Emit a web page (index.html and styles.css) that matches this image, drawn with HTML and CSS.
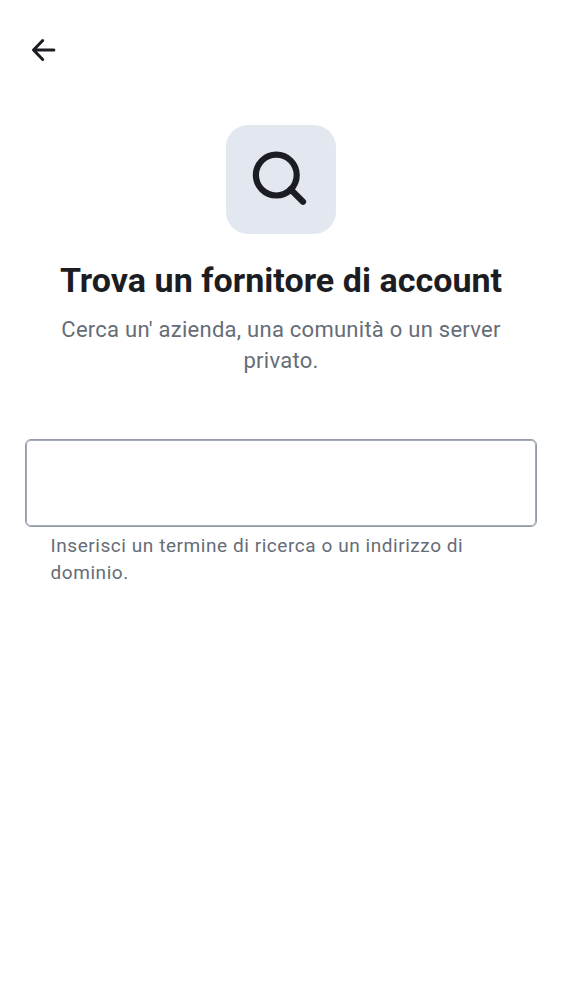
FILE: index.html
```html
<!DOCTYPE html>
<html lang="it">
<head>
<meta charset="utf-8">
<title>Trova un fornitore di account</title>
<link rel="stylesheet" href="styles.css">
</head>
<body>
<header class="topbar">
<button class="back" aria-label="Indietro"><svg width="26" height="24" viewBox="0 0 26 24"><path d="M22.9 12H3M11.7 2.5L2.5 12l9.2 9.5"/></svg></button>
</header>
<main class="content">
<div class="badge"><svg width="56" height="56" viewBox="0 0 56 56"><circle cx="23.3" cy="23.1" r="20.4"/><path d="M37.5 37.3L50 49.8"/></svg></div>
<h1 class="title">Trova un fornitore di account</h1>
<p class="subtitle">Cerca un' azienda, una comunità o un server<br>privato.</p>
<input class="field" type="text" aria-label="Fornitore di account">
<p class="hint">Inserisci un termine di ricerca o un indirizzo di<br>dominio.</p>
</main>
</body>
</html>
```
FILE: styles.css
```css
* { box-sizing: border-box; }
body { margin: 0; min-height: 1000px; background: #fff; font-family: Roboto, sans-serif; color: #1b1d22; }
.topbar { display: flex; align-items: center; height: 100px; padding-left: 31px; }
.back { display: flex; padding: 0; border: 0; background: none; }
.back svg { fill: none; stroke: #1b1d22; stroke-width: 3; stroke-linecap: round; stroke-linejoin: round; }
.content { display: flex; flex-direction: column; align-items: center; padding: 25px 25px 0; }
.badge { display: grid; place-items: center; width: 110px; height: 109px; border-radius: 22px; background: #e3e7f0; }
.badge svg { overflow: visible; fill: none; stroke: #1b1d22; stroke-width: 6.2; stroke-linecap: round; }
.title { margin: 25px 0 0; font-size: 34px; line-height: 42px; font-weight: 700; letter-spacing: 0.04px; white-space: nowrap; }
.subtitle { margin: 13px 0 0; font-size: 22px; line-height: 31px; letter-spacing: 0.26px; color: #656d77; text-align: center; white-space: nowrap; }
.field { width: 512px; height: 88px; margin: 63px 0 0; padding: 0 25px; border: 1px solid #949ba7; border-radius: 6px; box-shadow: inset 0 0 0 1px #a3abb5; background: #fff; font: inherit; font-size: 25px; outline: none; }
.hint { align-self: flex-start; margin: 6px 0 0 25.5px; font-size: 19px; line-height: 26.5px; letter-spacing: 0.56px; color: #656d77; white-space: nowrap; }
```
